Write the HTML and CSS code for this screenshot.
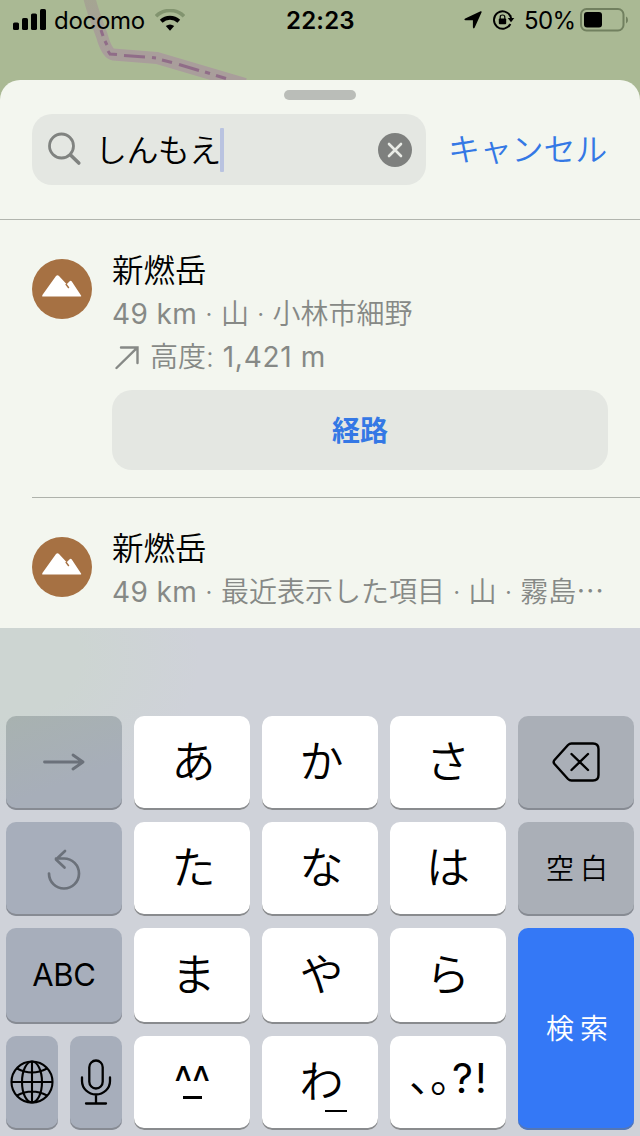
FILE: index.html
```html
<!DOCTYPE html>
<html lang="ja">
<head>
<meta charset="utf-8">
<title>マップ検索</title>
<link rel="stylesheet" href="styles.css">
</head>
<body>
<div class="screen">
  <svg class="map" viewBox="0 0 640 110">
    <defs><linearGradient id="road" x1="0" y1="0" x2="0" y2="50" gradientUnits="userSpaceOnUse"><stop offset="0" stop-color="#a5a592"/><stop offset="1" stop-color="#a99e9b"/></linearGradient></defs>
    <path d="M88 -8 C91 8 97 22 102 36 Q107 54 113 54.500 L157 58 L245 84" fill="none" stroke="url(#road)" stroke-width="12" stroke-linejoin="round"/>
    <path d="M101 30 L103 36 M105 41 L107 45 M108 51 L110 54 L117 54.500 M124 55.500 L145 57 M152 57.500 L156 58 M162 60 L172 62.500 M179 64.500 L199 70.500 M205 72 L210 73.500 M216 75.500 L226 78.500" fill="none" stroke="#906d88" stroke-width="3"/>
  </svg>

  <header class="status">
    <div class="status-left">
      <svg class="signal" width="34" height="22" viewBox="0 0 34 22"><rect x="0" y="13.5" width="6" height="7.5" rx="1.6"/><rect x="9" y="9" width="6" height="12" rx="1.6"/><rect x="18" y="4.5" width="6" height="16.500" rx="1.6"/><rect x="27" y="0" width="6" height="21" rx="1.6"/></svg>
      <span class="carrier">docomo</span>
      <svg class="wifi" width="30" height="22" viewBox="0 0 30 22"><path d="M1 7.200 A20 20 0 0 1 29 7.200" fill="none" stroke="#82946f" stroke-width="3.600"/><path d="M6.200 12.300 A13 13 0 0 1 23.800 12.300" fill="none" stroke="#000" stroke-width="4"/><path d="M10.800 17 A7 7 0 0 1 19.200 17 L15 21.800Z"/></svg>
    </div>
    <span class="time">22:23</span>
    <div class="status-right">
      <svg class="nav" width="18" height="18" viewBox="0 0 18 18"><path d="M17.600 1.200 L10.600 16.800 Q9.300 18.300 8.900 16.300 V9.200 H1.600 Q-.6 8.700 1.200 7.500 L16.600 .3 Q17.900 0 17.600 1.200Z"/></svg>
      <svg class="lock" width="22" height="20" viewBox="0 0 22 20"><path d="M17.600 6.500 A8.700 8.700 0 1 0 17.400 14" fill="none" stroke="#000" stroke-width="1.900"/><path d="M17.300 5.500 L18.300 9" stroke="#000" stroke-width="1.900"/><path d="M14.800 8 H21.300 L18 12.300Z"/><rect x="5.800" y="8.500" width="7.400" height="5.800" rx="1"/><path d="M7.200 9 V7 Q7.200 5 9.500 5 T11.800 7 V9" fill="none" stroke="#000" stroke-width="1.200"/></svg>
      <span class="percent">50%</span>
      <svg class="battery" width="49" height="24" viewBox="0 0 49 24"><rect x="1" y="1" width="42.500" height="21.500" rx="5.500" fill="none" stroke="#71805f" stroke-width="2"/><rect x="4" y="4" width="18" height="15.500" rx="3"/><path d="M46 8.500 Q48 9 48 12 T46 15.500Z" fill="#71805f"/></svg>
    </div>
  </header>

  <main class="sheet">
    <div class="grabber"></div>
    <div class="search-row">
      <div class="field">
        <svg class="glass" width="36" height="36" viewBox="0 0 36 36" fill="none" stroke="#808380"><circle cx="13.500" cy="14" r="12" stroke-width="2.800"/><path d="M22.500 23 L30.800 31" stroke-width="3.600" stroke-linecap="round"/></svg>
        <span class="query">しんもえ</span><i class="caret"></i>
        <svg class="clear" width="34" height="34" viewBox="0 0 34 34"><circle cx="17" cy="17" r="17" fill="#7e807e"/><path d="M11 11 L23 23 M23 11 L11 23" stroke="#e9ebe6" stroke-width="2.600" stroke-linecap="round"/></svg>
      </div>
      <span class="cancel">キャンセル</span>
    </div>

    <section class="result first">
      <svg class="pin" width="60" height="60" viewBox="0 0 60 60"><circle cx="30" cy="30" r="30" fill="#a67143"/><path d="M10.500 37.500 H48.700 Q49.500 37.500 49.200 36.700 L39.800 22.400 Q38.700 21.200 37.400 22.400 L34.700 25.300 L27 17 Q25.500 15.300 24 17 L10.400 36 Q9.800 37.500 10.500 37.500Z" fill="#fff"/><path d="M33.800 25 L36.800 29" stroke="#a67143" stroke-width="1.400"/></svg>
      <div class="info">
        <h2>新燃岳</h2>
        <p><span class="num">49 km</span> · 山 · 小林市細野</p>
        <p class="altitude"><svg width="24" height="24" viewBox="0 0 24 24" fill="none" stroke="#868986" stroke-width="2.400" stroke-linecap="round"><path d="M1.500 22 L22 1.800 M6 1.500 H22.500 V17"/></svg><span>高度: <span class="num meters">1,421 m</span></span></p>
        <div class="route">経路</div>
      </div>
    </section>
    <section class="result second">
      <svg class="pin" width="60" height="60" viewBox="0 0 60 60"><circle cx="30" cy="30" r="30" fill="#a67143"/><path d="M10.500 37.500 H48.700 Q49.500 37.500 49.200 36.700 L39.800 22.400 Q38.700 21.200 37.400 22.400 L34.700 25.300 L27 17 Q25.500 15.300 24 17 L10.400 36 Q9.800 37.500 10.500 37.500Z" fill="#fff"/><path d="M33.800 25 L36.800 29" stroke="#a67143" stroke-width="1.400"/></svg>
      <div class="info">
        <h2>新燃岳</h2>
        <p><span class="num">49 km</span> · 最近表示した項目 · 山 · 霧島<span class="more">⋯</span></p>
      </div>
    </section>
  </main>

  <div class="keyboard">
    <div class="key fn k-next"><svg width="42" height="18" viewBox="0 0 42 18" fill="none" stroke="#6b717a" stroke-width="2.800" stroke-linecap="round" stroke-linejoin="round"><path d="M1.500 9 H40 M30 2 L40 9 L30 16"/></svg></div>
    <div class="key kana">あ</div><div class="key kana">か</div><div class="key">さ</div>
    <div class="key fn flat"><svg width="48" height="40" viewBox="0 0 48 40" fill="none" stroke="#000" stroke-width="2.400" stroke-linecap="round" stroke-linejoin="round"><path d="M19.500 1.500 H41 Q46.500 1.500 46.500 7 V33 Q46.500 38.500 41 38.500 H19.500 Q17.500 38.500 16 37 L2.500 22 Q.8 20 2.500 18 L16 3 Q17.500 1.500 19.500 1.500Z M19.500 12 L36 28 M36 12 L19.500 28"/></svg></div>

    <div class="key fn"><svg class="undo" width="36" height="42" viewBox="0 0 36 42" fill="none" stroke="#6b717a" stroke-width="2.700" stroke-linecap="round" stroke-linejoin="round"><path d="M3 24.500 A15 15 0 1 0 18 9.500 H10 M19 2 L10 10.500 L18.500 18.500"/></svg></div>
    <div class="key kana">た</div><div class="key kana">な</div><div class="key">は</div>
    <div class="key fn flat word">空白</div>

    <div class="key fn abc">ABC</div>
    <div class="key kana">ま</div><div class="key kana">や</div><div class="key">ら</div>
    <div class="key search word">検索</div>

    <div class="pair">
      <div class="key fn"><svg width="44" height="44" viewBox="0 0 44 44" fill="none" stroke="#000" stroke-width="2.100"><circle cx="22" cy="22" r="20.500"/><ellipse cx="22" cy="22" rx="10" ry="20.500"/><path d="M22 1.500 V42.500 M1.500 22 H42.500 M7 8.500 Q22 16.500 37 8.500 M7 35.500 Q22 27.500 37 35.500"/></svg></div>
      <div class="key fn"><svg width="32" height="46" viewBox="0 0 32 46" fill="none" stroke="#000" stroke-width="2.300" stroke-linecap="round"><rect x="9.300" y="1.500" width="13.400" height="28" rx="6.700"/><path d="M2 18.500 V22 A14 13.500 0 0 0 30 22 V18.500 M16 36 V44.500 M6 44.500 H26"/></svg></div>
    </div>
    <div class="key face"><span>^^</span><i></i></div>
    <div class="key kana wa">わ<i></i></div>
    <div class="key punct"><span class="marks">、。</span><span class="ascii">?!</span></div>
  </div>
</div>
</body>
</html>
```

FILE: styles.css
```css
* { box-sizing: border-box; }
body { margin: 0; font-family: Inter, "Noto Sans CJK JP", sans-serif; color: #000; }
svg { display: block; flex: none; }
h2, p { margin: 0; }
.screen { position: relative; width: 640px; height: 1136px; overflow: hidden; background: #aab994; display: flex; flex-direction: column; }
.map { position: absolute; left: 0; top: 0; width: 640px; height: 110px; }

.status { position: relative; height: 80px; padding: 0 13px; display: grid; grid-template-columns: 1fr auto 1fr; font-size: 24px; line-height: 42px; }
.status-left, .status-right { display: flex; height: 40px; align-items: center; }
.status-right { justify-content: flex-end; }
.signal { margin-bottom: 1px; }
.carrier { margin-left: 7px; width: 90px; letter-spacing: -.3px; padding-top: 2px; }
.wifi { margin-left: 11px; }
.time { font-weight: 600; width: 68px; text-align: center; letter-spacing: .2px; white-space: nowrap; }
.nav { margin-right: 11px; }
.lock { margin-right: 9px; }
.percent { width: 50px; margin-right: 6px; letter-spacing: -.6px; padding-top: 2px; }
.battery { margin-right: -2px; margin-top: -1px; }

.sheet { position: relative; height: 548px; background: #f3f6ef; border-radius: 20px 20px 0 0; overflow: hidden; }
.grabber { width: 72px; height: 10px; border-radius: 5px; background: #babdb8; margin: 10px auto 14px; }
.search-row { display: flex; height: 106px; padding-left: 32px; border-bottom: 1px solid #b1b5ae; }
.field { display: flex; align-items: center; width: 394px; height: 71px; padding: 0 14px 0 16px; border-radius: 20px; background: #e4e7e2; }
.query { margin-left: 11px; width: 125px; font-size: 32px; letter-spacing: -.6px; font-weight: 350; line-height: 70px; padding-top: 2px; white-space: nowrap; }
.caret { width: 4px; height: 44px; border-radius: 1px; background: #b9c3e0; }
.clear { margin-left: auto; }
.cancel { margin-left: 22px; font-size: 32px; font-weight: 350; line-height: 71px; letter-spacing: -.2px; color: #3478e5; white-space: nowrap; }

.result { display: flex; padding-left: 32px; }
.pin { margin: 39px 20px 0 0; }
.info { width: 496px; white-space: nowrap; }
.first { height: 278px; position: relative; }
.first::after { content: ""; position: absolute; left: 32px; right: 0; bottom: 0; height: 1px; background: #aeb2ab; }
.info h2 { margin-top: 29px; font-size: 31.5px; line-height: 44px; font-weight: 350; }
.info p { font-size: 28px; line-height: 43px; color: #868986; font-weight: 350; }
.num { font-weight: 400; letter-spacing: .4px; }
.meters { letter-spacing: .7px; margin-left: 1px; }
.altitude { display: flex; align-items: center; }
.altitude svg { margin: 0 11px 0 3px; }
.route { margin-top: 11px; height: 80px; border-radius: 20px; background: #e4e7e2; color: #3478e5; font-weight: 700; font-size: 28px; line-height: 83px; text-align: center; }

.keyboard { height: 508px; padding: 88px 6px 6px; background: radial-gradient(ellipse 200px 150px at 0 30px, #cdd5d2 40%, #cfd2d9); display: grid; grid-template-columns: repeat(5, 116px); grid-template-rows: 94px 94px 96px 94px; gap: 12px; }
.key { position: relative; display: flex; align-items: center; justify-content: center; border-radius: 10px; background: #fff; box-shadow: inset 0 -2px #898b8e; font-size: 44px; font-weight: 350; line-height: 60px; padding-bottom: 3px; }
.kana { padding-left: 3px; }
.fn { background: #a7aebb; box-shadow: inset 0 -2px #878b93; }
.k-next { background: linear-gradient(160deg, #a8b2b0, #a7aeb9 65%); }
.flat { background: #aaafb7; }
.word { font-size: 28px; letter-spacing: 6px; padding: 0 0 0 8px; }
.search { grid-row: span 2; background: #3478f6; color: #fff; box-shadow: inset 0 -2px #5477b5; }
.abc { font-size: 31px; letter-spacing: -.3px; font-weight: 400; }
.pair { display: grid; grid-template-columns: 52px 52px; gap: 12px; }
.undo { margin-bottom: -4px; }
.face { flex-direction: column; }
.face span { font-family: Inter, sans-serif; font-size: 39px; height: 30px; line-height: 38px; letter-spacing: -.5px; font-weight: 400; transform: translateY(-2px) scaleY(1.25); }
.face i { width: 19px; height: 3px; background: #000; margin-top: 2px; }
.wa i { position: absolute; left: 63px; top: 74px; width: 22px; height: 2px; background: #000; }
.punct { justify-content: flex-start; padding-left: 19px; }
.marks { width: 42px; font-size: 42px; font-feature-settings: "halt"; margin-top: -10px; }
.ascii { font-size: 41px; letter-spacing: 2px; margin: -7px 0 0 1px; font-weight: 400; }
```
